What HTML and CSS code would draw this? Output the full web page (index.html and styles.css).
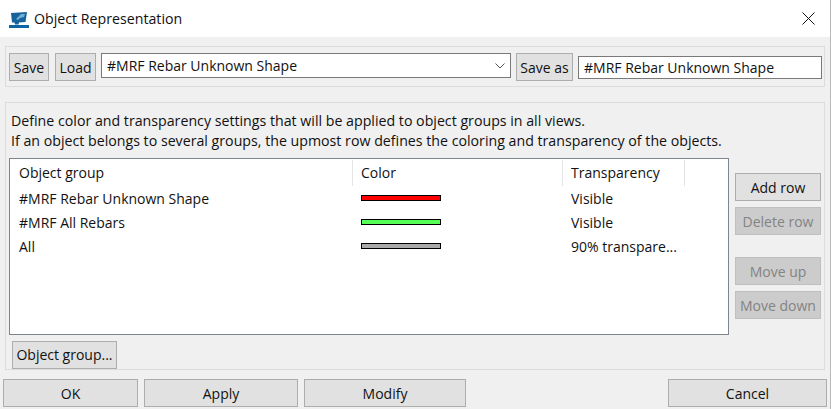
FILE: index.html
```html
<!DOCTYPE html>
<html lang="en">
<head>
<meta charset="utf-8">
<title>Object Representation</title>
<link rel="stylesheet" href="styles.css">
</head>
<body>
<div class="dialog">
  <header class="titlebar">
    <svg class="app-icon" width="20" height="18" viewBox="0 0 20 18">
      <path d="M2 3 L18 2 L16.5 12 L10 12.5 L9.5 14.5 L6 14.5 L5.5 12.5 L3 12.5 Z" fill="#16639c"/>
      <path d="M7 9 L12 4 L16 4 L15 7 L11 8 L9 10 Z" fill="#6fb0d8"/>
      <rect x="0" y="15" width="20" height="3" fill="#0f64a3"/>
    </svg>
    <span class="title">Object Representation</span>
    <svg class="close" width="13" height="13" viewBox="0 0 13 13"><path d="M0.5 0.5 L12.5 12.5 M12.5 0.5 L0.5 12.5" stroke="#111" stroke-width="1" fill="none"/></svg>
  </header>
  <section class="toolbar">
    <button class="btn save">Save</button>
    <button class="btn load">Load</button>
    <div class="select"><span>#MRF Rebar Unknown Shape</span>
      <svg width="10" height="6" viewBox="0 0 10 6"><path d="M0.5 0.5 L5 5 L9.5 0.5" stroke="#555" fill="none"/></svg>
    </div>
    <button class="btn saveas">Save as</button>
    <div class="input">#MRF Rebar Unknown Shape</div>
  </section>
  <section class="group">
    <p class="desc">Define color and transparency settings that will be applied to object groups in all views.<br>If an object belongs to several groups, the upmost row defines the coloring and transparency of the objects.</p>
    <div class="main">
      <div class="table">
        <div class="row head">
          <div class="c1 cell">Object group</div><div class="c2 cell">Color</div><div class="c3 cell">Transparency</div>
        </div>
        <div class="row"><div class="c1">#MRF Rebar Unknown Shape</div><div class="c2"><i class="swatch red"></i></div><div class="c3">Visible</div></div>
        <div class="row"><div class="c1">#MRF All Rebars</div><div class="c2"><i class="swatch green"></i></div><div class="c3">Visible</div></div>
        <div class="row"><div class="c1">All</div><div class="c2"><i class="swatch gray"></i></div><div class="c3">90% transpare...</div></div>
      </div>
      <div class="side">
        <button class="btn">Add row</button>
        <button class="btn off">Delete row</button>
        <button class="btn off spaced">Move up</button>
        <button class="btn off">Move down</button>
      </div>
    </div>
    <button class="btn objgroup">Object group...</button>
  </section>
  <footer class="footer">
    <button class="btn ok">OK</button>
    <button class="btn apply">Apply</button>
    <button class="btn modify">Modify</button>
    <button class="btn cancel">Cancel</button>
  </footer>
</div>
</body>
</html>
```
FILE: styles.css
```css
* { box-sizing: border-box; }
html, body { margin: 0; padding: 0; }
body { width: 831px; height: 409px; overflow: hidden; background: #f0f0f0; font-family: "Open Sans", "Noto Sans", sans-serif; font-size: 14px; color: #111; }
.dialog { display: flex; flex-direction: column; height: 409px; border-right: 1px solid #b8b8b8; }
.titlebar { height: 37px; background: #fff; display: flex; align-items: center; padding: 0 15px 0 9px; }
.app-icon { margin-right: 5px; margin-top: 1px; }
.title { flex: 1; font-size: 14.2px; }
.btn { flex: none; height: 28px; margin: 0; padding: 0; border: 1px solid #adadad; background: #e1e1e1; color: #111; font: inherit; white-space: nowrap; }
.btn.off { background: #ccc; color: #838383; border-color: #bfbfbf; }
.toolbar { margin: 9px 5px 0; height: 41px; border: 1px solid #dcdcdc; display: flex; align-items: flex-start; padding: 6px 3px 0; }
.save { width: 40px; }
.load { width: 41px; margin-left: 6px; }
.select { flex: none; width: 410px; height: 25px; margin-left: 5px; background: #fff; border: 1px solid #7a7a7a; display: flex; align-items: center; justify-content: space-between; padding: 0 5px; }
.saveas { width: 57px; margin-left: 5px; }
.input { flex: none; width: 244px; height: 23px; margin: 3px 0 0 5px; background: #fff; border: 1px solid #7a7a7a; padding-left: 5px; line-height: 21px; }
.group { margin: 15px 5px 0; height: 268px; border: 1px solid #dcdcdc; padding: 0 3px; }
.desc { margin: 8px 0 0 2px; line-height: 20px; font-size: 14.2px; white-space: nowrap; height: 47px; }
.main { display: flex; }
.table { width: 720px; height: 177px; padding-top: 1px; background: #fff; border: 1px solid #7f858c; }
.row { display: flex; height: 24px; align-items: center; }
.row.head { height: 26px; }
.c1 { width: 343px; padding-left: 9px; }
.c2 { width: 210px; padding-left: 8px; display: flex; align-items: center; }
.c3 { width: 122px; padding-left: 8px; white-space: nowrap; }
.cell { height: 26px; line-height: 26px; border-right: 1px solid #e4e4e4; }
.swatch { display: block; width: 80px; height: 6px; border: 1px solid #000; }
.red { background: #ff0000; }
.green { background: #55ff55; }
.gray { background: #aaaaaa; }
.side { display: flex; flex-direction: column; width: 86px; margin-left: 6px; padding-top: 15px; gap: 6px; }
.side .btn { width: 86px; }
.spaced { margin-top: 16px; }
.objgroup { width: 105px; margin: 6px 0 0 3px; padding-bottom: 1px; display: block; }
.footer { display: flex; padding: 9px 3px 0; gap: 6px; }
.ok { width: 135px; }
.apply { width: 154px; }
.modify { width: 162px; }
.cancel { width: 159px; margin-left: 196px; }
```
